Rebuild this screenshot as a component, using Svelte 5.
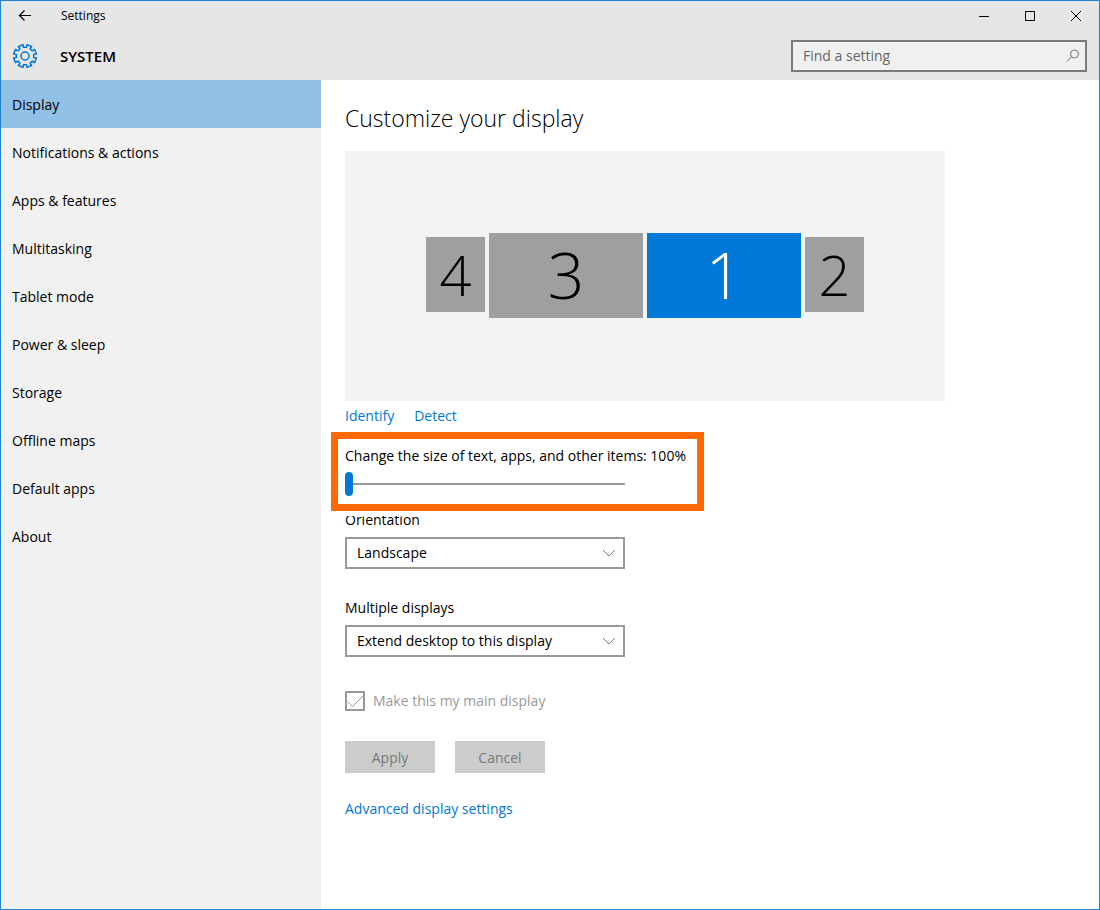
<script lang="ts">
	const pages = [
		'Display',
		'Notifications & actions',
		'Apps & features',
		'Multitasking',
		'Tablet mode',
		'Power & sleep',
		'Storage',
		'Offline maps',
		'Default apps',
		'About'
	];

	const monitors = [
		{ id: 4, small: true },
		{ id: 3, small: false },
		{ id: 1, small: false },
		{ id: 2, small: true }
	];

	let activePage = $state('Display');
	let selectedMonitor = $state(1);
	let scale = $state(100);
	let orientation = $state('landscape');
	let multiple = $state('extend');
	let query = $state('');

	// eight-tooth gear outline around (13, 13)
	function gearPath() {
		const steps: string[] = [];
		for (let i = 0; i < 8; i++) {
			const base = (i * Math.PI) / 4 + Math.PI / 8;
			const points = [
				[8.8, -0.22],
				[11.6, -0.22],
				[11.6, 0.22],
				[8.8, 0.22]
			];
			for (const [radius, offset] of points) {
				const x = 13 + radius * Math.cos(base + offset);
				const y = 13 + radius * Math.sin(base + offset);
				steps.push(`${x.toFixed(2)} ${y.toFixed(2)}`);
			}
		}
		return `M${steps.join('L')}Z`;
	}
</script>

<div class="window">
	<header class="top">
		<div class="titlebar">
			<button class="back" aria-label="Back">
				<svg width="14" height="12" viewBox="0 0 14 12">
					<path d="M13 5.5H1.5M6.5 .5l-5 5 5 5" />
				</svg>
			</button>
			<span class="title">Settings</span>
			<div class="window-buttons">
				<button aria-label="Minimize">
					<svg width="10" height="10" viewBox="0 0 10 10"><path d="M0 5.5h10" /></svg>
				</button>
				<button aria-label="Maximize">
					<svg width="10" height="10" viewBox="0 0 10 10"><path d="M.5.5h9v9h-9z" /></svg>
				</button>
				<button aria-label="Close">
					<svg width="10" height="10" viewBox="0 0 10 10"><path d="M0 0l10 10M10 0L0 10" /></svg>
				</button>
			</div>
		</div>

		<div class="section-bar">
			<svg class="gear" width="26" height="26" viewBox="0 0 26 26">
				<path d={gearPath()} />
				<circle cx="13" cy="13" r="4" />
			</svg>
			<h1>SYSTEM</h1>
			<div class="search">
				<input type="search" placeholder="Find a setting" aria-label="Find a setting" bind:value={query} />
				<svg width="14" height="14" viewBox="0 0 14 14">
					<circle cx="8.5" cy="5" r="4" />
					<path d="M5.6 7.9L1 12.5" />
				</svg>
			</div>
		</div>
	</header>

	<div class="body">
		<nav class="sidebar">
			{#each pages as page}
				<button
					class="nav-item"
					class:active={page === activePage}
					onclick={() => (activePage = page)}
				>
					{page}
				</button>
			{/each}
		</nav>

		<main class="content">
			<h2>Customize your display</h2>

			<div class="monitors">
				{#each monitors as monitor}
					<button
						class="monitor"
						class:small={monitor.small}
						class:selected={monitor.id === selectedMonitor}
						onclick={() => (selectedMonitor = monitor.id)}
					>
						{monitor.id}
					</button>
				{/each}
			</div>

			<div class="links">
				<a href="#identify">Identify</a>
				<a href="#detect">Detect</a>
			</div>

			<div class="highlight">
				<label for="scale">Change the size of text, apps, and other items: {scale}%</label>
				<input id="scale" type="range" min="100" max="200" step="25" bind:value={scale} />
			</div>

			<div class="field">
				<label for="orientation">Orientation</label>
				<div class="select">
					<select id="orientation" bind:value={orientation}>
						<option value="landscape">Landscape</option>
						<option value="portrait">Portrait</option>
					</select>
					<svg width="14" height="8" viewBox="0 0 14 8"><path d="M1 1l6 6 6-6" /></svg>
				</div>
			</div>

			<div class="field">
				<label for="multiple">Multiple displays</label>
				<div class="select">
					<select id="multiple" bind:value={multiple}>
						<option value="extend">Extend desktop to this display</option>
						<option value="duplicate">Duplicate desktop</option>
					</select>
					<svg width="14" height="8" viewBox="0 0 14 8"><path d="M1 1l6 6 6-6" /></svg>
				</div>
			</div>

			<label class="check">
				<span class="box">
					<input type="checkbox" checked disabled />
					<svg width="20" height="20" viewBox="0 0 20 20"><path d="M2.5 10.5l5 5L18 5" /></svg>
				</span>
				Make this my main display
			</label>

			<div class="actions">
				<button disabled>Apply</button>
				<button disabled>Cancel</button>
			</div>

			<a href="#advanced">Advanced display settings</a>
		</main>
	</div>
</div>

<style>
	:global(body) {
		margin: 0;
	}

	.window {
		display: flex;
		flex-direction: column;
		box-sizing: border-box;
		min-height: 100vh;
		border: 1px solid #1f83d6;
		background: #fff;
		color: #000;
		font-family: 'Segoe UI', 'Open Sans', 'Noto Sans', sans-serif;
		font-size: 14px;
		line-height: 20px;
	}

	button,
	input,
	select {
		font: inherit;
		color: inherit;
	}

	button {
		padding: 0;
		border: 0;
		background: none;
	}

	svg {
		display: block;
		fill: none;
		stroke: currentColor;
	}

	a {
		color: #0078d7;
		text-decoration: none;
	}

	.top {
		background: #e6e6e6;
	}

	.titlebar {
		display: flex;
		align-items: center;
		height: 30px;
	}

	.back {
		display: grid;
		place-items: center;
		width: 48px;
		height: 100%;
	}

	.back svg {
		stroke-width: 1.2;
	}

	.title {
		margin-left: 12px;
		font-size: 12px;
	}

	.window-buttons {
		display: flex;
		height: 100%;
		margin-left: auto;
	}

	.window-buttons button {
		display: grid;
		place-items: center;
		width: 46px;
	}

	.section-bar {
		display: flex;
		align-items: center;
		height: 49px;
		padding: 0 12px 0 11px;
	}

	.gear {
		color: #0078d7;
		stroke-width: 1.5;
		stroke-linejoin: round;
	}

	h1 {
		margin: 0 0 0 22px;
		font-size: 15px;
		font-weight: 600;
	}

	.search {
		display: flex;
		align-items: center;
		box-sizing: border-box;
		width: 296px;
		height: 32px;
		margin-left: auto;
		padding: 0 5px 0 10px;
		border: 2px solid #7a7a7a;
		background: #f0f0f0;
		color: #777;
	}

	.search input {
		flex: 1;
		min-width: 0;
		padding: 0;
		border: 0;
		outline: none;
		background: none;
		appearance: none;
	}

	.search input::placeholder {
		color: #666;
		opacity: 1;
	}

	.body {
		display: flex;
		flex: 1;
	}

	.sidebar {
		flex: 0 0 320px;
		background: #f1f1f1;
	}

	.nav-item {
		display: block;
		width: 100%;
		height: 48px;
		padding: 2px 11px 0;
		text-align: left;
	}

	.nav-item.active {
		background: #91c1e7;
	}

	.content {
		flex: 1;
		min-width: 0;
		padding: 22px 24px;
	}

	h2 {
		margin: 0 0 17px;
		font-size: 23px;
		font-weight: 300;
		line-height: 32px;
	}

	.monitors {
		display: flex;
		justify-content: center;
		align-items: flex-start;
		gap: 4px;
		box-sizing: border-box;
		max-width: 600px;
		height: 250px;
		padding-top: 82px;
		background: #f3f3f3;
	}

	.monitor {
		width: 154px;
		height: 85px;
		padding-bottom: 2px;
		background: #9f9f9f;
		font-size: 64px;
		font-weight: 300;
		line-height: 72px;
	}

	.monitor.small {
		width: 59px;
		height: 75px;
		margin-top: 4px;
		font-size: 56px;
	}

	.monitor.selected {
		background: #0078d7;
		color: #fff;
	}

	.links {
		display: flex;
		gap: 20px;
		padding: 5px 0 6px;
	}

	.highlight {
		position: relative;
		box-sizing: border-box;
		width: 373px;
		margin: 0 0 -1px -14px;
		padding: 7px 7px 8px;
		border: 7px solid #ff6a00;
		background: #fff;
		box-shadow: 0 5px 0 #fff;
		white-space: nowrap;
	}

	.highlight label {
		display: block;
	}

	.highlight input {
		display: block;
		width: 280px;
		height: 24px;
		margin: 6px 0 0;
		background: linear-gradient(#999, #999) center / 100% 2px no-repeat;
		appearance: none;
	}

	.highlight input::-webkit-slider-thumb {
		width: 8px;
		height: 24px;
		border-radius: 4px;
		background: #0078d7;
		appearance: none;
	}

	.field {
		max-width: 280px;
		margin-bottom: 29px;
	}

	.field label {
		display: block;
		margin-bottom: 7px;
	}

	.select {
		display: grid;
		align-items: center;
	}

	.select select,
	.select svg {
		grid-area: 1 / 1;
	}

	.select select {
		width: 100%;
		height: 32px;
		padding: 0 32px 0 10px;
		border: 2px solid #999;
		border-radius: 0;
		background: #fff;
		appearance: none;
	}

	.select svg {
		justify-self: end;
		margin-right: 9px;
		color: #777;
		pointer-events: none;
	}

	.check {
		display: flex;
		align-items: center;
		gap: 8px;
		margin-top: 34px;
		color: #999;
	}

	.box {
		display: grid;
	}

	.box input,
	.box svg {
		grid-area: 1 / 1;
	}

	.box input {
		width: 20px;
		height: 20px;
		margin: 0;
		border: 2px solid #999;
		appearance: none;
	}

	.box svg {
		visibility: hidden;
	}

	.box input:checked + svg {
		visibility: visible;
	}

	.actions {
		display: flex;
		gap: 20px;
		margin: 30px 0 26px;
	}

	.actions button {
		width: 90px;
		height: 32px;
		padding-top: 2px;
		background: #ccc;
		color: #7a7a7a;
	}
</style>
